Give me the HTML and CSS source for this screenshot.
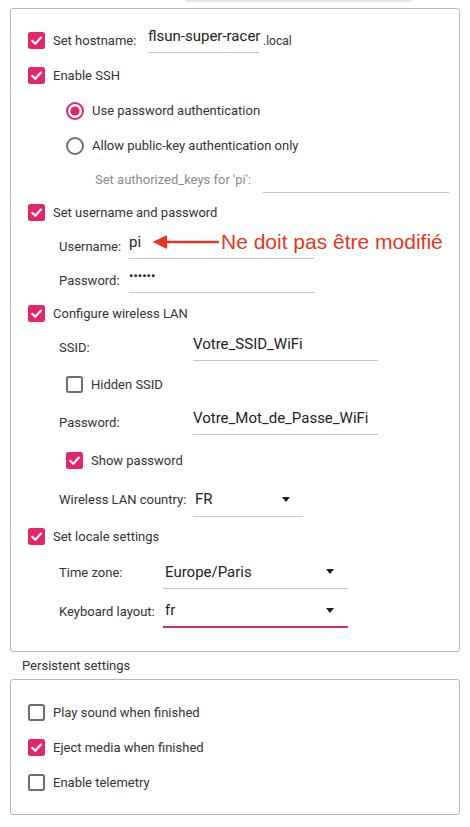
FILE: index.html
```html
<!DOCTYPE html>
<html lang="en">
<head>
<meta charset="utf-8">
<title>OS customisation</title>
<link rel="stylesheet" href="styles.css">
</head>
<body>
<div class="topbar"></div>
<section class="panel main">
  <div class="row h36 ind0">
    <span class="cb on"><svg viewBox="0 0 17 17" width="17" height="17"><rect width="17" height="17" rx="2.5"/><path d="M4.2 8.8 L7.3 11.8 L12.9 5.6"/></svg></span>
    <span class="lbl w-host">Set hostname:</span>
    <span class="field f-host">flsun-super-racer</span>
    <span class="suffix">.local</span>
  </div>
  <div class="row h35 ind0">
    <span class="cb on"><svg viewBox="0 0 17 17" width="17" height="17"><rect width="17" height="17" rx="2.5"/><path d="M4.2 8.8 L7.3 11.8 L12.9 5.6"/></svg></span>
    <span class="lbl">Enable SSH</span>
  </div>
  <div class="row h35 ind2">
    <span class="radio on"><svg viewBox="0 0 18 18" width="18" height="18"><circle class="ring" cx="9" cy="9" r="8"/><circle class="dot" cx="9" cy="9" r="4.6"/></svg></span>
    <span class="lbl">Use password authentication</span>
  </div>
  <div class="row h35 ind2">
    <span class="radio"><svg viewBox="0 0 18 18" width="18" height="18"><circle class="ring" cx="9" cy="9" r="8"/></svg></span>
    <span class="lbl">Allow public-key authentication only</span>
  </div>
  <div class="row h33 ind3">
    <span class="lbl muted w-keys">Set authorized_keys for 'pi':</span>
    <span class="field f-keys"></span>
  </div>
  <div class="row h33 ind0">
    <span class="cb on"><svg viewBox="0 0 17 17" width="17" height="17"><rect width="17" height="17" rx="2.5"/><path d="M4.2 8.8 L7.3 11.8 L12.9 5.6"/></svg></span>
    <span class="lbl">Set username and password</span>
  </div>
  <div class="row h34 ind1 annotated">
    <span class="lbl w70">Username:</span>
    <span class="field f185">pi</span>
    <div class="note">
      <svg class="note-arrow" viewBox="0 0 68 16" width="68" height="16"><polygon points="0.5,8 15,1 15,15"/><line x1="14" y1="8" x2="67" y2="8"/></svg>
      <span class="note-text">Ne doit pas être modifié</span>
    </div>
  </div>
  <div class="row h34 ind1">
    <span class="lbl w70">Password:</span>
    <span class="field f185 dots">••••••</span>
  </div>
  <div class="row h33 ind0">
    <span class="cb on"><svg viewBox="0 0 17 17" width="17" height="17"><rect width="17" height="17" rx="2.5"/><path d="M4.2 8.8 L7.3 11.8 L12.9 5.6"/></svg></span>
    <span class="lbl">Configure wireless LAN</span>
  </div>
  <div class="row h35 ind1">
    <span class="lbl w134">SSID:</span>
    <span class="field f185">Votre_SSID_WiFi</span>
  </div>
  <div class="row h38 ind2">
    <span class="cb off"></span>
    <span class="lbl">Hidden SSID</span>
  </div>
  <div class="row h38 ind1">
    <span class="lbl w134">Password:</span>
    <span class="field f185">Votre_Mot_de_Passe_WiFi</span>
  </div>
  <div class="row h39 ind2">
    <span class="cb on"><svg viewBox="0 0 17 17" width="17" height="17"><rect width="17" height="17" rx="2.5"/><path d="M4.2 8.8 L7.3 11.8 L12.9 5.6"/></svg></span>
    <span class="lbl">Show password</span>
  </div>
  <div class="row h39 ind1">
    <span class="lbl w134">Wireless LAN country:</span>
    <span class="select s-country"><span>FR</span><i class="caret"></i></span>
  </div>
  <div class="row h34 ind0">
    <span class="cb on"><svg viewBox="0 0 17 17" width="17" height="17"><rect width="17" height="17" rx="2.5"/><path d="M4.2 8.8 L7.3 11.8 L12.9 5.6"/></svg></span>
    <span class="lbl">Set locale settings</span>
  </div>
  <div class="row h38 ind1">
    <span class="lbl w104">Time zone:</span>
    <span class="select s-wide"><span>Europe/Paris</span><i class="caret"></i></span>
  </div>
  <div class="row h40 ind1">
    <span class="lbl w104">Keyboard layout:</span>
    <span class="select s-wide focused"><span>fr</span><i class="caret"></i></span>
  </div>
</section>
<div class="section-title">Persistent settings</div>
<section class="panel persist">
  <div class="row h35 ind0">
    <span class="cb off"></span>
    <span class="lbl">Play sound when finished</span>
  </div>
  <div class="row h35 ind0">
    <span class="cb on"><svg viewBox="0 0 17 17" width="17" height="17"><rect width="17" height="17" rx="2.5"/><path d="M4.2 8.8 L7.3 11.8 L12.9 5.6"/></svg></span>
    <span class="lbl">Eject media when finished</span>
  </div>
  <div class="row h35 ind0">
    <span class="cb off"></span>
    <span class="lbl">Enable telemetry</span>
  </div>
</section>
</body>
</html>
```

FILE: styles.css
```css
html, body {
  margin: 0;
  padding: 0;
  background: #ffffff;
}
body {
  width: 470px;
  height: 827px;
  overflow: hidden;
  font-family: Roboto, "Noto Sans", "Liberation Sans", sans-serif;
  color: #333333;
}
.topbar {
  height: 2px;
  width: 228px;
  margin-left: 185px;
  margin-bottom: 6px;
  background: #e6e6e6;
  border-radius: 0 0 3px 3px;
}
.panel {
  margin-left: 10px;
  width: 450px;
  box-sizing: border-box;
  border: 1px solid #b6b6b6;
  border-radius: 3px;
}
.main {
  padding: 13px 0 20px;
}
.persist {
  padding: 15px 0 14px;
}
.section-title {
  height: 27px;
  display: flex;
  align-items: center;
  padding-left: 22px;
  font-size: 13px;
  color: #333;
}
.row {
  display: flex;
  align-items: center;
  font-size: 13px;
  box-sizing: border-box;
}
.h33 { height: 33px; }
.h34 { height: 34px; }
.h35 { height: 35px; }
.h36 { height: 36px; }
.h38 { height: 38px; }
.h39 { height: 39px; }
.h40 { height: 40px; }
.ind0 { padding-left: 17px; }
.ind1 { padding-left: 48px; }
.ind2 { padding-left: 55px; }
.ind3 { padding-left: 84px; }

.cb, .radio {
  flex: none;
  display: block;
  margin-right: 8px;
}
.cb svg, .radio svg { display: block; }
.cb.on rect { fill: #e5256a; }
.cb.on path {
  fill: none;
  stroke: #ffffff;
  stroke-width: 2.2;
  stroke-linecap: round;
  stroke-linejoin: round;
}
.cb.off {
  width: 17px;
  height: 17px;
  box-sizing: border-box;
  border: 2px solid #6e6e6e;
  border-radius: 2.5px;
}
.radio .ring {
  fill: none;
  stroke: #707070;
  stroke-width: 2;
}
.radio.on .ring { stroke: #e5256a; }
.radio.on .dot { fill: #e5256a; }

.lbl {
  flex: none;
  white-space: nowrap;
}
.muted { color: #8c8c8c; }
.w-host { width: 95px; }
.w-keys { width: 168px; }
.w70 { width: 70px; }
.w104 { width: 104px; }
.w134 { width: 134px; }

.field {
  flex: none;
  height: 26px;
  box-sizing: border-box;
  font-size: 15px;
  line-height: 18px;
  color: #222;
  border-bottom: 1px solid #c4c4c4;
  white-space: nowrap;
}
.f-host { width: 111px; }
.f-keys { width: 186px; }
.f185 { width: 185px; }
.dots {
  font-size: 13px;
  letter-spacing: 0;
}
.suffix {
  font-size: 12px;
  margin-left: 4px;
  padding-top: 2px;
}

.select {
  flex: none;
  height: 34px;
  box-sizing: border-box;
  display: flex;
  align-items: center;
  justify-content: space-between;
  padding-left: 2px;
  font-size: 15px;
  color: #222;
  border-bottom: 1px solid #c4c4c4;
}
.s-country { width: 110px; padding-right: 13px; }
.s-wide { width: 185px; padding-right: 14px; }
.select.focused { border-bottom: 2px solid #d12c6c; }
.caret {
  display: block;
  width: 0;
  height: 0;
  border-left: 4.5px solid transparent;
  border-right: 4.5px solid transparent;
  border-top: 5px solid #1f1f1f;
}

.annotated { position: relative; }
.note {
  position: absolute;
  left: 141px;
  top: 0;
  height: 25px;
  display: flex;
  align-items: center;
}
.note-arrow { display: block; margin-right: 1px; }
.note-arrow polygon { fill: #ea3421; }
.note-arrow line { stroke: #ea3421; stroke-width: 2.6; }
.note-text {
  font-family: "Liberation Sans", Arial, sans-serif;
  font-size: 21px;
  color: #ea3421;
  white-space: nowrap;
}
```
